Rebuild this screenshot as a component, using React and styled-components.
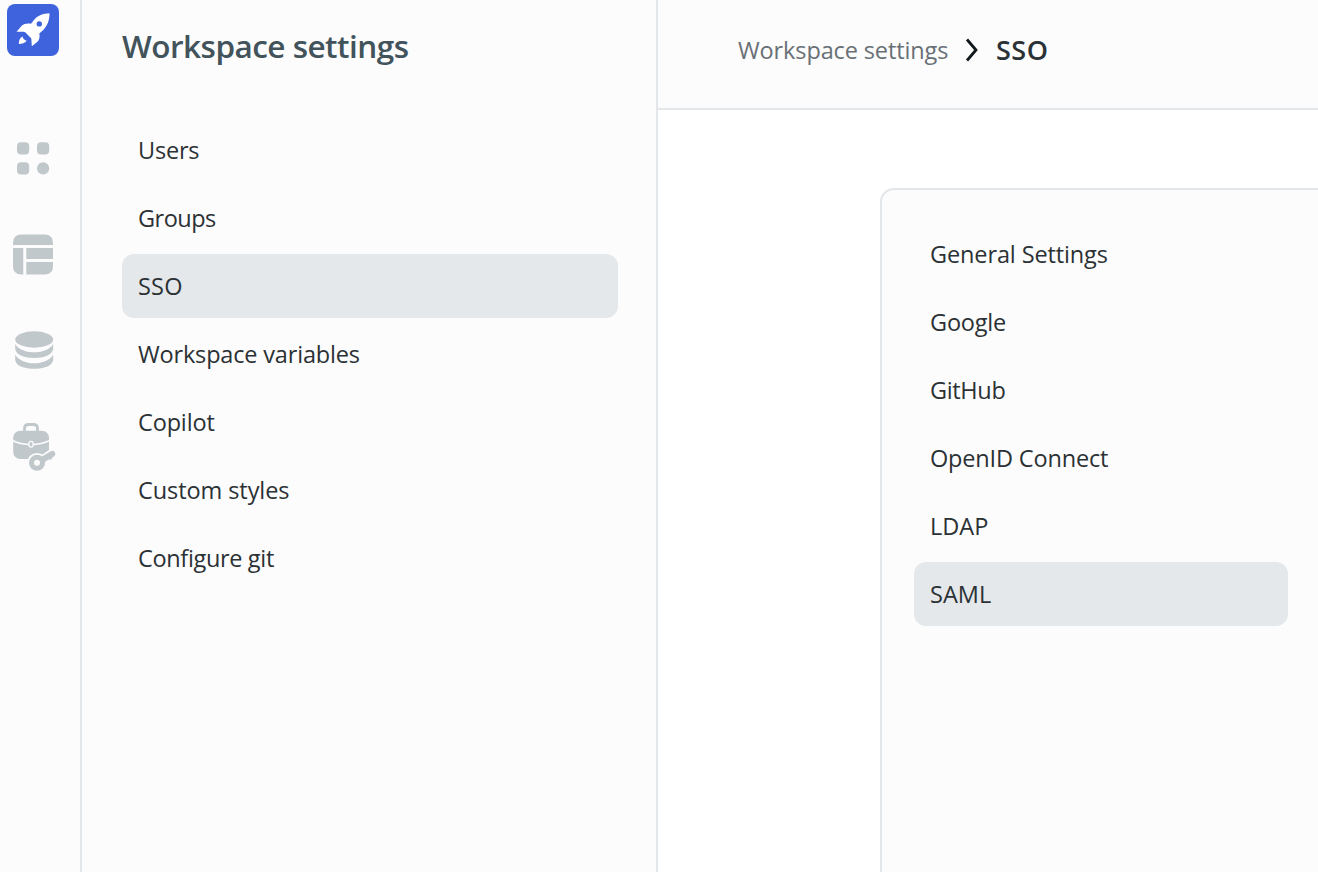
import React from 'react';
import styled, { createGlobalStyle } from 'styled-components';

const GlobalStyle = createGlobalStyle`
  * { box-sizing: border-box; }
  body { margin: 0; font-family: "Open Sans", "Noto Sans", sans-serif; background: #fff; overflow: hidden; }
`;

const Page = styled.div`
  display: flex;
  width: 100vw;
  height: 100vh;
  overflow: hidden;
`;

const Rail = styled.nav`
  flex: 0 0 82px;
  display: flex;
  flex-direction: column;
  background: #fcfcfd;
  border-right: 2px solid #e3e7ea;
`;

const Logo = styled.div`
  width: 52px;
  height: 52px;
  margin: 4px 0 62px 7px;
  border-radius: 8px;
  background: #3e63dd;
`;

const RailButton = styled.a`
  display: block;
  width: 66px;
  height: 80px;
  margin-bottom: 16px;
  color: #c1c8cb;
  svg { display: block; }
`;

const Sidebar = styled.aside`
  flex: 0 0 576px;
  padding: 23px 38px 0 40px;
  background: #fcfcfc;
  border-right: 2px solid #e3e7ea;
`;

const Title = styled.h1`
  margin: 0 0 49px;
  height: 46px;
  font-size: 31.5px;
  line-height: 46px;
  font-weight: 600;
  letter-spacing: -0.52px;
  color: #42535b;
  white-space: nowrap;
`;

const List = styled.div`
  display: flex;
  flex-direction: column;
  gap: 4px;
`;

const Item = styled.a`
  height: 64px;
  padding: 0 16px;
  border-radius: 12px;
  background: ${(p) => (p.$active ? '#e4e8eb' : 'transparent')};
  color: #2b3134;
  font-size: 23.5px;
  line-height: 65px;
  letter-spacing: ${(p) => p.$tracking}px;
  white-space: nowrap;
`;

const Main = styled.main`
  flex: 1;
  min-width: 0;
  display: flex;
  flex-direction: column;
  background: #fff;
`;

const Header = styled.header`
  flex: 0 0 110px;
  display: flex;
  align-items: flex-start;
  padding: 30px 0 0 80px;
  background: #fcfcfc;
  border-bottom: 2px solid #e3e7ea;
`;

const Crumb = styled.span`
  width: ${(p) => p.$width}px;
  font-size: ${(p) => (p.$current ? 27 : 23.5)}px;
  font-weight: ${(p) => (p.$current ? 600 : 400)};
  line-height: ${(p) => (p.$current ? 40 : 41)}px;
  letter-spacing: ${(p) => p.$tracking}px;
  color: ${(p) => (p.$current ? '#2b3236' : '#687076')};
  white-space: nowrap;
`;

const Chevron = styled.svg`
  width: 14px;
  height: 26px;
  margin: 7px 17px 0 0;
`;

const Card = styled.section`
  flex: 1;
  margin: 78px 0 0 222px;
  padding: 32px 30px 0 32px;
  background: #fcfcfc;
  border: 2px solid #e3e7ea;
  border-width: 2px 0 0 2px;
  border-top-left-radius: 14px;
`;

const settings = [
  ['Users', -0.2],
  ['Groups', -0.5],
  ['SSO', 0.2],
  ['Workspace variables', -0.17],
  ['Copilot', -0.15],
  ['Custom styles', -0.08],
  ['Configure git', -0.34],
];

const providers = [
  ['General Settings', -0.12],
  ['Google', -0.2],
  ['GitHub', -0.35],
  ['OpenID Connect', -0.17],
  ['LDAP', 0],
  ['SAML', 0],
];

const Menu = ({ items, active }) => (
  <List>
    {items.map(([label, tracking]) => (
      <Item key={label} $active={label === active} $tracking={tracking}>{label}</Item>
    ))}
  </List>
);

const Rocket = () => (
  <svg width="52" height="52" viewBox="7 4 52 52" fill="#fff">
    <path fillRule="evenodd" d="M49.5 13.3C43 13.4 37.5 15.5 34 20L31 23.8C27.5 23.2 24 23.700 21.700 25.800L16.500 31.700H23.500Q25.500 32 26.500 33.500L31.300 38.500L31.800 46.300L37.500 41.800C39.500 39.500 40 36.500 39.300 33.400L43.500 29.700C47.500 25.500 49.600 20 49.500 13.300ZM39.300 21.200a2.700 2.700 0 1 1 0 5.400a2.700 2.700 0 0 1 0-5.400Z" />
    <path d="M22.500 36.500C20 38 18.800 40 18.800 44C22 44 25 43.300 26.700 40.800Q26 40.500 25 40Q23 39 22.500 36.500Z" />
  </svg>
);

const GridIcon = () => (
  <svg width="66" height="80" viewBox="0 118 66 80" fill="currentColor">
    <rect x="17" y="142.3" width="12.2" height="12.2" rx="4" />
    <rect x="37" y="142.3" width="12.2" height="12.2" rx="4" />
    <rect x="17" y="162.3" width="12.2" height="12.2" rx="4" />
    <circle cx="43.1" cy="168.4" r="6.1" />
  </svg>
);

const TableIcon = () => (
  <svg width="66" height="80" viewBox="0 214 66 80" fill="currentColor">
    <path d="M13 245v-2q0-8.5 8.5-8.5h23q8.5 0 8.5 8.5v2ZM13 248h10.300v26.500h-1.800q-8.500 0-8.500-8.500ZM26.300 248H53v11H26.300ZM26.300 262H53v4q0 8.500-8.500 8.500H26.300Z" />
  </svg>
);

const DatabaseIcon = () => (
  <svg width="66" height="80" viewBox="0 310 66 80" fill="currentColor">
    <ellipse cx="34.2" cy="339.5" rx="19" ry="8.2" />
    <path d="M15.2 344C19 350.500 28 352.300 34.200 352.300S49.500 350.500 53.200 344V349C52 355 44 358 34.200 358S16 355 15.200 349Z" />
    <path d="M15.2 354.500C19 361.500 28 363.300 34.200 363.300S49.500 361.500 53.200 354.500V360C52 366 44 368.800 34.200 368.800S16 366 15.200 360Z" />
  </svg>
);

const BriefcaseKeyIcon = () => (
  <svg width="66" height="80" viewBox="0 406 66 80" fill="currentColor">
    <path d="M24.5 432V428.500Q24.500 424.500 28.500 424.500H33.500Q37.500 424.500 37.500 428.500V432" fill="none" stroke="currentColor" strokeWidth="2.8" />
    <rect x="13.2" y="430.8" width="35.8" height="28.2" rx="7" />
    <path d="M12.5 440.500Q20 444.500 31 444.500T49.500 440.500" fill="none" stroke="#fcfcfd" strokeWidth="1.7" />
    <rect x="28.9" y="441.300" width="4.200" height="5.800" rx="2.100" stroke="#fcfcfd" strokeWidth="1.300" />
    <path d="M40 457.500L52 449.500L54 458L46 463Z" fill="#fcfcfd" stroke="#fcfcfd" strokeWidth="2.400" />
    <circle cx="37" cy="462.800" r="9.800" fill="#fcfcfd" />
    <path d="M40.500 457.300L50.800 451.300Q53 450 54.300 451.400L55.300 453.500Q55.700 455.300 54.200 456.300L52.500 457.200L51.200 459.800L48.500 459.600L43.800 462.800Z" />
    <circle cx="37" cy="462.800" r="5.500" fill="none" stroke="currentColor" strokeWidth="5" />
  </svg>
);

export default function App() {
  return (
    <>
      <GlobalStyle />
      <Page>
        <Rail>
          <Logo><Rocket /></Logo>
          <RailButton><GridIcon /></RailButton>
          <RailButton><TableIcon /></RailButton>
          <RailButton><DatabaseIcon /></RailButton>
          <RailButton><BriefcaseKeyIcon /></RailButton>
        </Rail>
        <Sidebar>
          <Title>Workspace settings</Title>
          <Menu items={settings} active="SSO" />
        </Sidebar>
        <Main>
          <Header>
            <Crumb $width={227} $tracking={-0.12}>Workspace settings</Crumb>
            <Chevron viewBox="965 37 14 26">
              <path d="M967 39.5L976 50L967 60.5" fill="none" stroke="#11181c" strokeWidth="2.8" />
            </Chevron>
            <Crumb $current $tracking={0.5}>SSO</Crumb>
          </Header>
          <Card>
            <Menu items={providers} active="SAML" />
          </Card>
        </Main>
      </Page>
    </>
  );
}
